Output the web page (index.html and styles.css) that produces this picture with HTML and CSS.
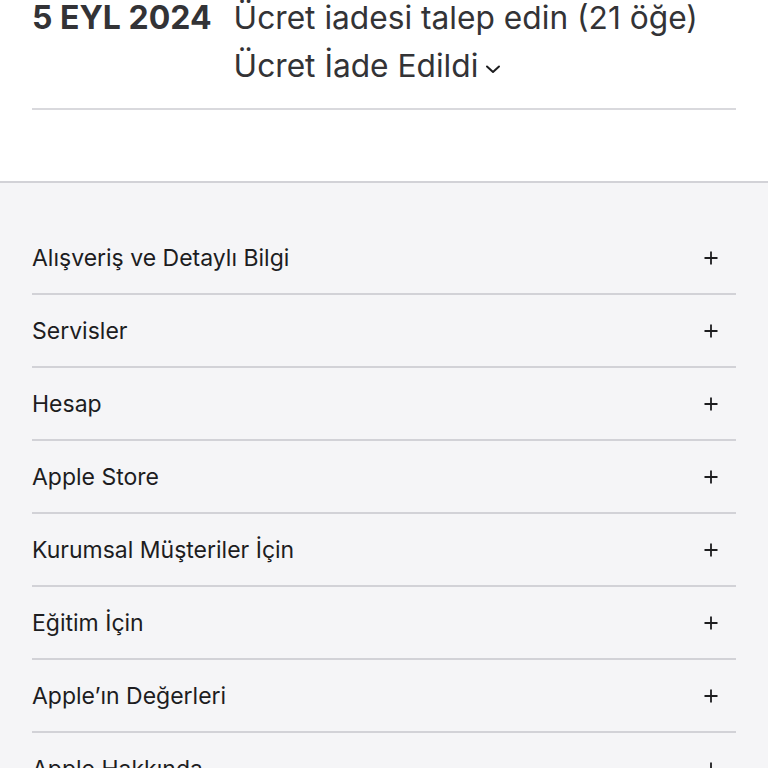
FILE: index.html
```html
<!DOCTYPE html>
<html lang="tr">
<head>
<meta charset="utf-8">
<link rel="stylesheet" href="styles.css">
</head>
<body>
<div class="page">
  <section class="order">
    <div class="order-row">
      <div class="date">5 EYL 2024</div>
      <div class="desc">
        <div class="desc-line">Ücret iadesi talep edin (21 öğe)</div>
        <div class="desc-line status">Ücret İade Edildi
          <svg class="chev" width="16" height="10" viewBox="0 0 16 10"><path d="M2 2.5 L8 8 L14 2.5" fill="none" stroke="#1d1d1f" stroke-width="2" stroke-linecap="round" stroke-linejoin="round"/></svg>
        </div>
      </div>
    </div>
  </section>
  <footer class="footer">
    <ul class="menu">
      <li class="item"><span>Alışveriş ve Detaylı Bilgi</span><svg class="plus" width="16" height="16" viewBox="0 0 16 16"><path d="M8 1.5 V14.5 M1.5 8 H14.5" stroke="#1d1d1f" stroke-width="1.8"/></svg></li>
      <li class="item"><span>Servisler</span><svg class="plus" width="16" height="16" viewBox="0 0 16 16"><path d="M8 1.5 V14.5 M1.5 8 H14.5" stroke="#1d1d1f" stroke-width="1.8"/></svg></li>
      <li class="item"><span>Hesap</span><svg class="plus" width="16" height="16" viewBox="0 0 16 16"><path d="M8 1.5 V14.5 M1.5 8 H14.5" stroke="#1d1d1f" stroke-width="1.8"/></svg></li>
      <li class="item"><span>Apple Store</span><svg class="plus" width="16" height="16" viewBox="0 0 16 16"><path d="M8 1.5 V14.5 M1.5 8 H14.5" stroke="#1d1d1f" stroke-width="1.8"/></svg></li>
      <li class="item"><span>Kurumsal Müşteriler İçin</span><svg class="plus" width="16" height="16" viewBox="0 0 16 16"><path d="M8 1.5 V14.5 M1.5 8 H14.5" stroke="#1d1d1f" stroke-width="1.8"/></svg></li>
      <li class="item"><span>Eğitim İçin</span><svg class="plus" width="16" height="16" viewBox="0 0 16 16"><path d="M8 1.5 V14.5 M1.5 8 H14.5" stroke="#1d1d1f" stroke-width="1.8"/></svg></li>
      <li class="item"><span>Apple’ın Değerleri</span><svg class="plus" width="16" height="16" viewBox="0 0 16 16"><path d="M8 1.5 V14.5 M1.5 8 H14.5" stroke="#1d1d1f" stroke-width="1.8"/></svg></li>
      <li class="item"><span>Apple Hakkında</span><svg class="plus" width="16" height="16" viewBox="0 0 16 16"><path d="M8 1.5 V14.5 M1.5 8 H14.5" stroke="#1d1d1f" stroke-width="1.8"/></svg></li>
    </ul>
  </footer>
</div>
</body>
</html>
```

FILE: styles.css
```css
* { box-sizing: border-box; }
html, body { margin: 0; padding: 0; background: #fff; }
body {
  font-family: Inter, "Liberation Sans", Arial, sans-serif;
  color: #1d1d1f;
  overflow: hidden;
  height: 768px;
}
.order { padding: 0 32px; }
.order-row {
  display: flex;
  gap: 22px;
  padding-bottom: 24px;
  border-bottom: 2px solid #d9d9dd;
}
.date {
  font-size: 32px;
  font-weight: 700;
  line-height: 36px;
  color: #333336;
  white-space: nowrap;
}
.desc {
  display: flex;
  flex-direction: column;
  gap: 12px;
  font-size: 31.7px;
  line-height: 36px;
  color: #333336;
}
.desc-line { white-space: nowrap; }
.status { display: flex; align-items: center; gap: 7px; }
.chev { margin-top: 6px; }
.footer {
  margin-top: 71px;
  background: #f5f5f7;
  border-top: 2px solid #d2d2d7;
  padding: 39px 32px 0;
}
.menu { list-style: none; margin: 0; padding: 0; }
.item {
  display: flex;
  align-items: center;
  justify-content: space-between;
  height: 73px;
  border-bottom: 2px solid #d2d2d7;
  font-size: 23px;
  padding-right: 17px;
  color: #1d1d1f;
}
.plus { display: block; }
```
